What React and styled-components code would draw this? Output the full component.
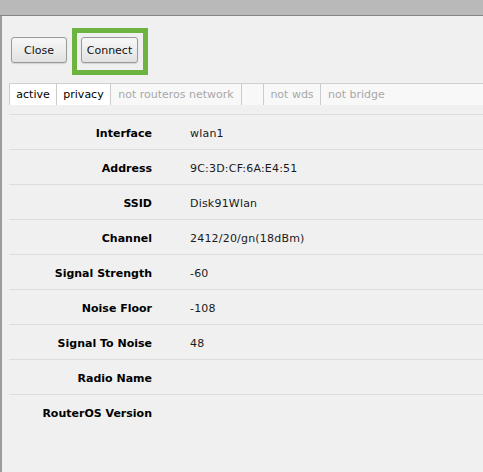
import React from "react";
import styled, { createGlobalStyle } from "styled-components";

const Global = createGlobalStyle`
  html, body { margin: 0; padding: 0; background: #f0f0f0; }
  body { font-family: "DejaVu Sans", Verdana, sans-serif; font-size: 11px; color: #000; }
`;

const Window = styled.div`
  width: 483px;
  height: 472px;
  overflow: hidden;
  background: #f0f0f0;
  display: flex;
  flex-direction: column;
`;

const TitleBar = styled.div`
  height: 15px;
  flex: none;
  background: #b9b9b9;
  border-bottom: 1px solid #868686;
`;

const Body = styled.div`
  flex: 1;
  border-left: 2px solid #9c9c9c;
  padding-left: 7px;
  display: flex;
  flex-direction: column;
`;

const Toolbar = styled.div`
  display: flex;
  align-items: flex-start;
  padding: 12px 0 0 2px;
`;

const Button = styled.button`
  width: ${(p) => p.$w}px;
  height: 26px;
  padding: 0;
  margin-top: ${(p) => p.$top || 0}px;
  font-family: "DejaVu Sans", Verdana, sans-serif;
  font-size: 11px;
  color: #111;
  background: linear-gradient(#f7f7f7, #e2e2e2);
  border: 1px solid #9a9a9a;
  border-radius: 3px;
  box-shadow: 0 1px 1px rgba(0, 0, 0, 0.12);
  cursor: pointer;
`;

const Highlight = styled.div`
  margin-left: 5px;
  padding: 4px 5px 7px 4px;
  border: 5px solid #6cb43f;
  display: flex;
`;

const Tabs = styled.div`
  margin-top: 8px;
  display: flex;
  height: 21px;
  background: #f8f8f8;
  border-top: 1px solid #cfcfcf;
`;

const Tab = styled.div`
  display: flex;
  align-items: center;
  justify-content: center;
  width: ${(p) => (p.$w ? `${p.$w}px` : "auto")};
  padding: 0 ${(p) => (p.$w ? 0 : 7)}px;
  box-sizing: border-box;
  border-left: 1px solid #cccccc;
  background: ${(p) => (p.$on ? "#ffffff" : "transparent")};
  color: ${(p) => (p.$on ? "#000" : "#a8a8a8")};
  font-size: 11px;
`;

const Rows = styled.div`
  margin-top: 9px;
  display: flex;
  flex-direction: column;
`;

const Row = styled.div`
  display: grid;
  grid-template-columns: 143px 1fr;
  column-gap: 38px;
  align-items: center;
  padding-top: 3px;
  box-sizing: border-box;
  height: 35px;
  border-top: 1px solid #dcdcdc;
`;

const Label = styled.div`
  text-align: right;
  font-weight: bold;
  font-size: 11px;
  color: #000;
`;

const Value = styled.div`
  font-size: 11px;
  color: #1a1a1a;
  letter-spacing: 0.2px;
`;

const tabs = [
  { t: "active", on: true, w: 47 },
  { t: "privacy", on: true, w: 54 },
  { t: "not routeros network", w: 131 },
  { t: "", w: 22 },
  { t: "not wds", w: 57 },
  { t: "not bridge" },
];

const rows = [
  ["Interface", "wlan1"],
  ["Address", "9C:3D:CF:6A:E4:51"],
  ["SSID", "Disk91Wlan"],
  ["Channel", "2412/20/gn(18dBm)"],
  ["Signal Strength", "-60"],
  ["Noise Floor", "-108"],
  ["Signal To Noise", "48"],
  ["Radio Name", ""],
  ["RouterOS Version", ""],
];

export default function App() {
  return (
    <Window>
      <Global />
      <TitleBar />
      <Body>
        <Toolbar>
          <Button $w={56} $top={9}>Close</Button>
          <Highlight>
            <Button $w={57}>Connect</Button>
          </Highlight>
        </Toolbar>
        <Tabs>
          {tabs.map((x, i) => (
            <Tab key={i} $on={x.on} $w={x.w}>
              {x.t}
            </Tab>
          ))}
        </Tabs>
        <Rows>
          {rows.map(([l, v], i) => (
            <Row key={i}>
              <Label>{l}</Label>
              <Value>{v}</Value>
            </Row>
          ))}
        </Rows>
      </Body>
    </Window>
  );
}
